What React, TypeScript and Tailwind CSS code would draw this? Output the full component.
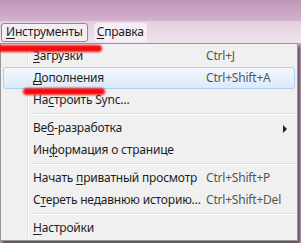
import React from 'react';

type Item =
  | { kind: 'item'; label: React.ReactNode; shortcut?: string; arrow?: boolean; active?: boolean }
  | { kind: 'sep' };

const u = (s: string) => <span className="underline underline-offset-2">{s}</span>;

const items: Item[] = [
  { kind: 'item', label: <>{u('З')}агрузки</>, shortcut: 'Ctrl+J' },
  { kind: 'item', label: <>{u('Д')}ополнения</>, shortcut: 'Ctrl+Shift+A', active: true },
  { kind: 'item', label: <>На{u('с')}троить Sync…</> },
  { kind: 'sep' },
  { kind: 'item', label: <>Ве{u('б')}-разработка</>, arrow: true },
  { kind: 'item', label: <>Ин{u('ф')}ормация о странице</> },
  { kind: 'sep' },
  { kind: 'item', label: <>Начать {u('п')}риватный просмотр</>, shortcut: 'Ctrl+Shift+P' },
  { kind: 'item', label: <>С{u('т')}ереть недавнюю историю…</>, shortcut: 'Ctrl+Shift+Del' },
  { kind: 'sep' },
  { kind: 'item', label: <>{u('Н')}астройки</> },
];

export default function App() {
  return (
    <div
      className="relative w-[301px] h-[243px] overflow-hidden bg-[#c7a6c3] text-[12px] tracking-[-0.2px] text-[#1e1e1e]"
      style={{ fontFamily: '"Noto Sans", "Open Sans", sans-serif' }}
    >
      {/* title glass */}
      <div className="h-[21px] bg-gradient-to-b from-[#bf97b8] to-[#d2b2cd]" />

      {/* menu bar */}
      <div className="flex h-[22px] items-center gap-[6px] bg-gradient-to-b from-[#e3cfe0] to-[#efe3ed] pl-[1px]">
        <div className="flex h-[19px] items-center rounded-[3px] border border-[#8e8a8e] bg-[#f3eef2] px-[4px]">
          {u('И')}нструменты
        </div>
        <div className="flex h-[19px] items-center rounded-[3px] bg-[#f5eef4] px-[3px]">
          {u('С')}правка
        </div>
      </div>

      {/* dropdown */}
      <div className="relative w-[298px] border border-[#979797] bg-[#f0f0f0] py-[1px] shadow-[2px_3px_3px_rgba(0,0,0,0.55)]">
        <div className="absolute left-[26px] top-[2px] bottom-[2px] w-[2px] border-l border-[#e2e3e3] bg-white" />
        {items.map((it, i) =>
          it.kind === 'sep' ? (
            <div key={i} className="flex h-[6px] items-center pl-[29px] pr-[1px]">
              <div className="h-[2px] w-full border-t border-[#e0e0e0] bg-white" />
            </div>
          ) : (
            <div
              key={i}
              className={`relative mx-[2px] flex h-[22px] items-center rounded-[3px] border pl-[29px] ${
                it.active
                  ? 'border-[#aecff7] bg-gradient-to-b from-[#f2f7fd] to-[#dceaf8]'
                  : 'border-transparent'
              }`}
            >
              <span className="w-[173px] whitespace-nowrap">{it.label}</span>
              {it.shortcut && <span className="whitespace-nowrap text-[#555]">{it.shortcut}</span>}
              {it.arrow && (
                <span className="absolute right-[7px] top-[7px] h-0 w-0 border-y-[4px] border-l-[4px] border-y-transparent border-l-[#202020]" />
              )}
            </div>
          )
        )}
      </div>

      {/* red marker strokes */}
      <div className="absolute left-[-4px] top-[45px] h-[7px] w-[106px] rounded-full bg-[#f20d0d] blur-[1px]" />
      <div className="absolute left-[23px] top-[88px] h-[7px] w-[82px] rounded-full bg-[#f20d0d] blur-[1px]" />
    </div>
  );
}
